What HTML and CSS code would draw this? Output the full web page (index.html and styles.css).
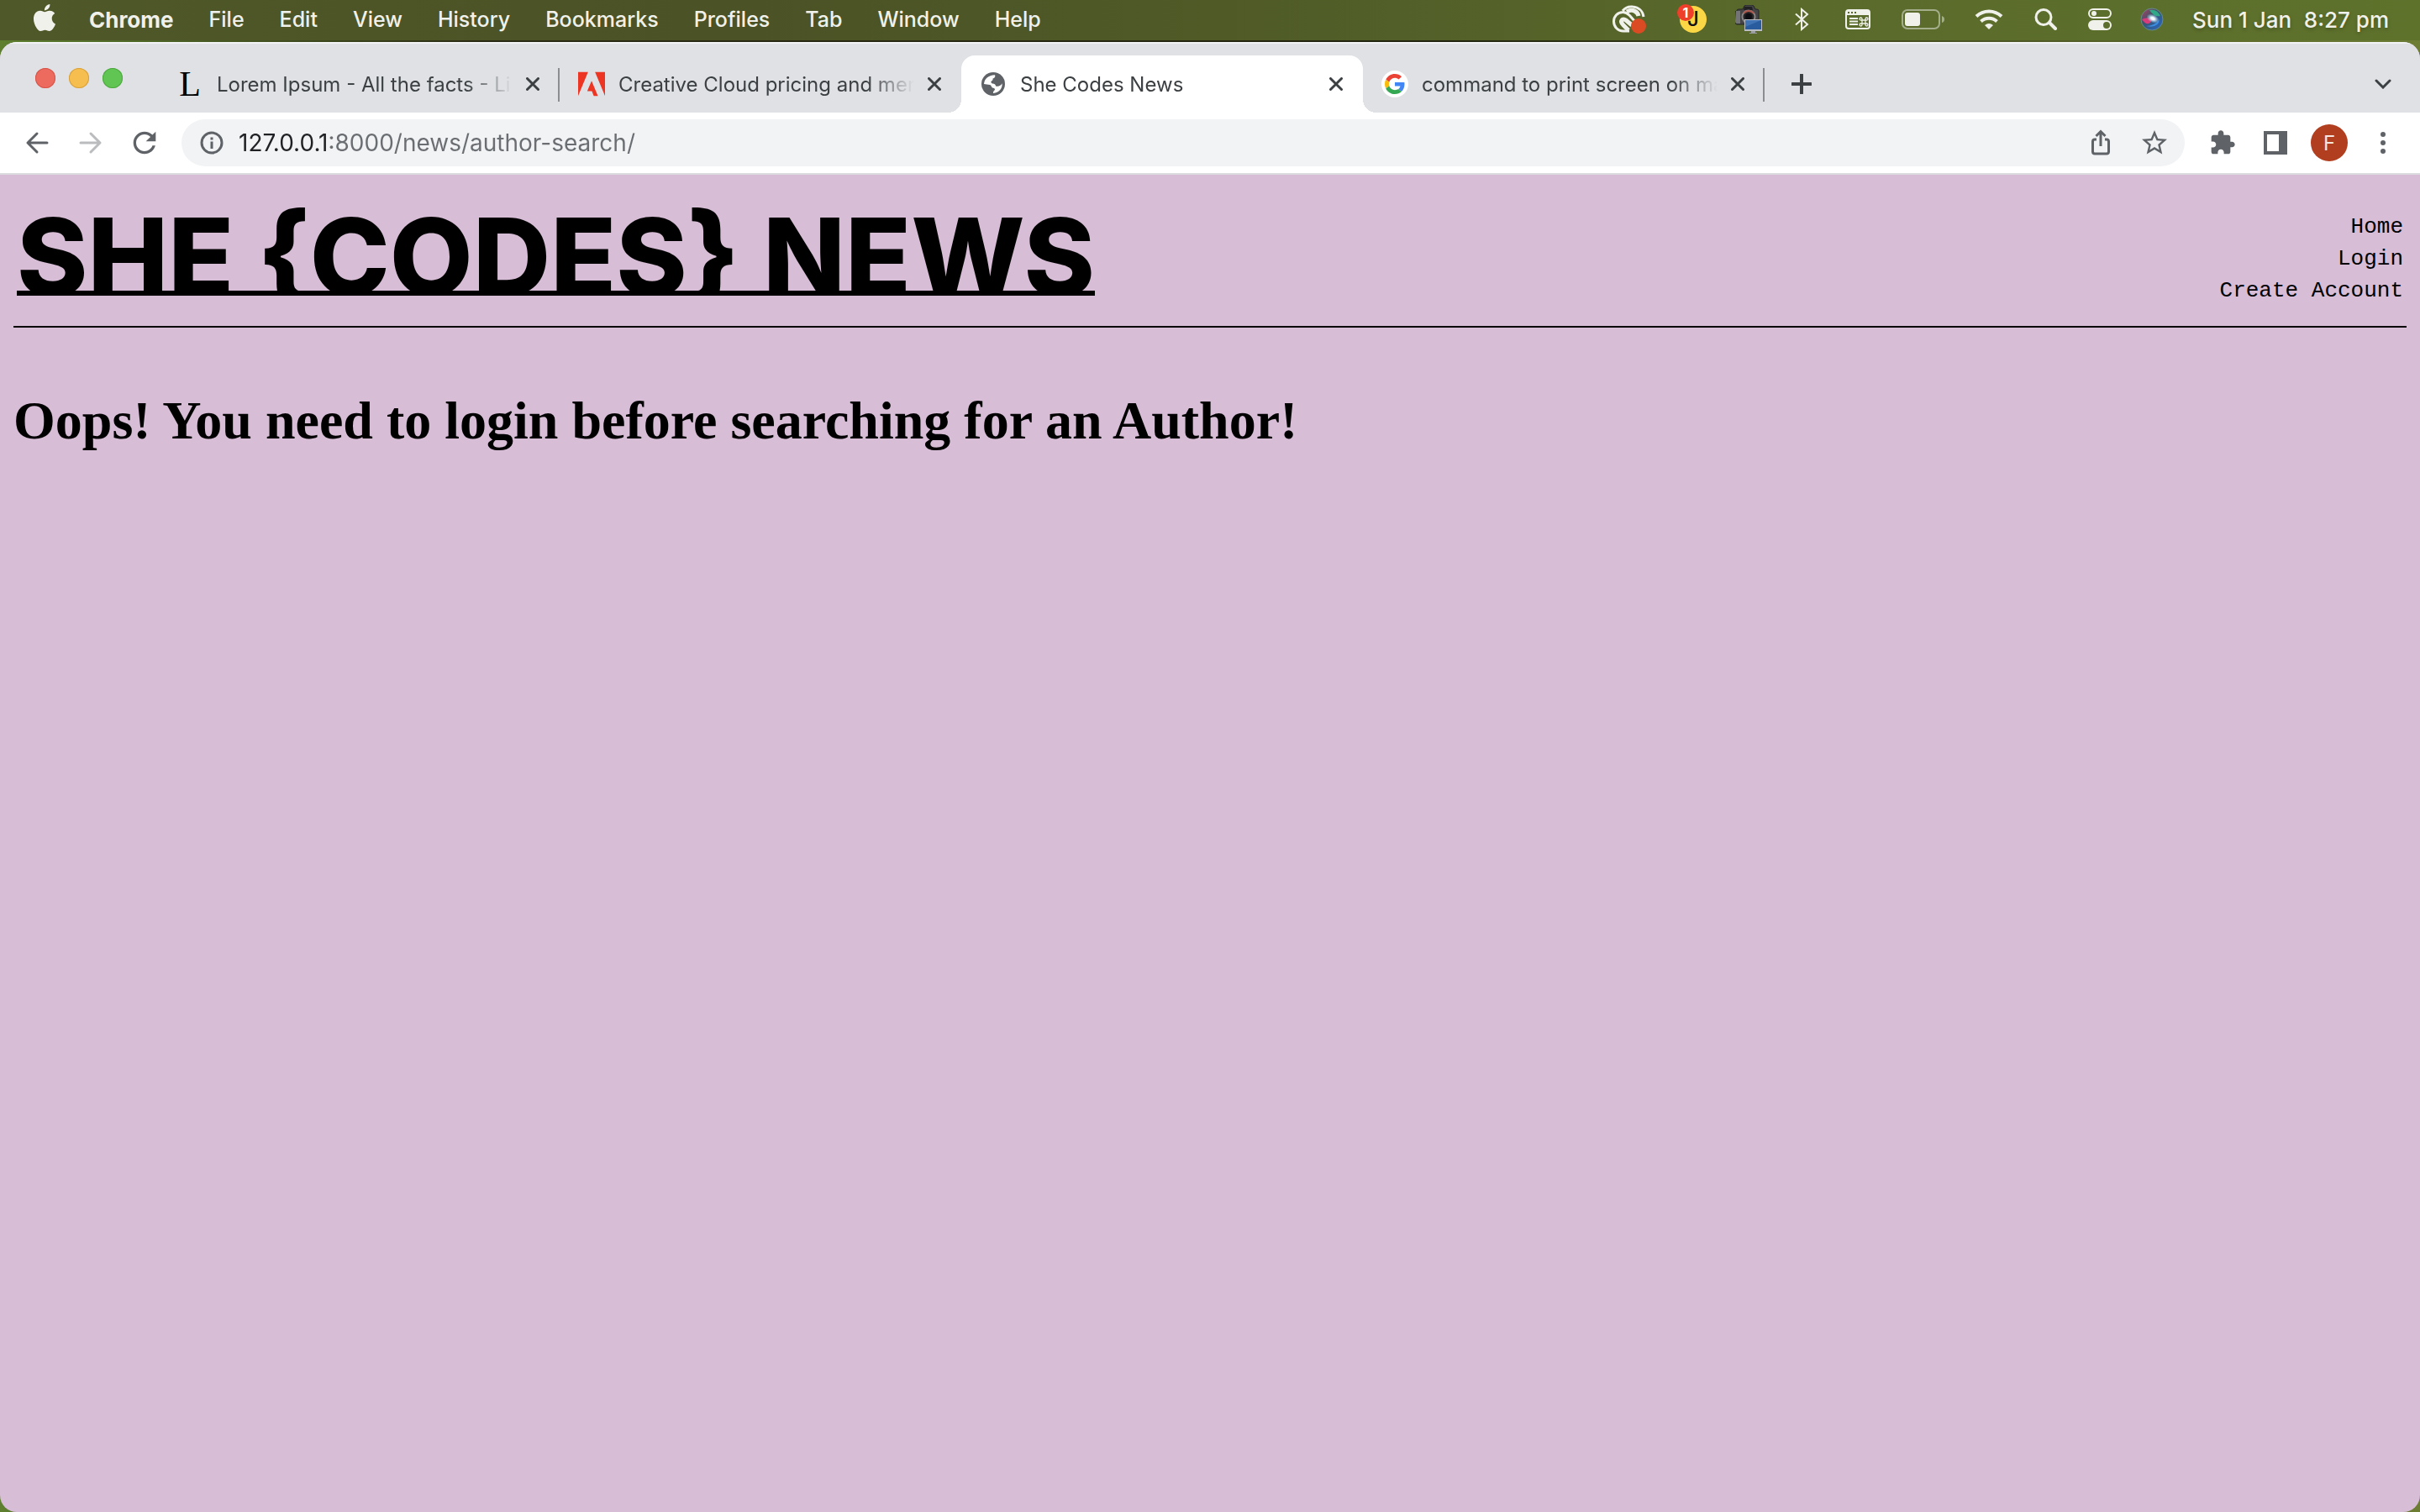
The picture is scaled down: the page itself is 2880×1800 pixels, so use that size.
FILE: index.html
```html
<!DOCTYPE html>
<html lang="en">
<head>
<meta charset="utf-8">
<title>She Codes News</title>
<link rel="stylesheet" href="styles.css">
</head>
<body>
<div class="menubar">
  <nav class="menus" aria-label="Application menu">
    <button class="apple" aria-label="Apple menu"><svg width="32" height="32" viewBox="0 0 24 24" fill="currentColor"><path d="M12.152 6.896c-.948 0-2.415-1.078-3.96-1.04-2.04.027-3.91 1.183-4.961 3.014-2.117 3.675-.546 9.103 1.519 12.09 1.013 1.454 2.208 3.09 3.792 3.039 1.52-.065 2.09-.987 3.935-.987 1.831 0 2.35.987 3.96.948 1.637-.026 2.676-1.48 3.676-2.948 1.156-1.688 1.636-3.325 1.662-3.415-.039-.013-3.182-1.221-3.22-4.857-.026-3.04 2.48-4.494 2.597-4.559-1.429-2.09-3.623-2.324-4.39-2.376-2-.156-3.675 1.09-4.61 1.09zM15.53 3.83c.843-1.012 1.4-2.427 1.245-3.83-1.207.052-2.662.805-3.532 1.818-.78.896-1.454 2.338-1.273 3.714 1.338.104 2.715-.688 3.559-1.701"/></svg></button>
    <button class="app-name">Chrome</button>
    <button>File</button>
    <button>Edit</button>
    <button>View</button>
    <button>History</button>
    <button>Bookmarks</button>
    <button>Profiles</button>
    <button>Tab</button>
    <button>Window</button>
    <button>Help</button>
  </nav>
  <div class="status">
    <button aria-label="Creative Cloud"><svg width="44" height="36" viewBox="0 0 44 36" fill="none" stroke="currentColor" stroke-width="3"><path d="M12 8C15 4 19 2.500 24 3c7 .5 12 5 13 12M20 32H13C6 32 1.500 26.500 1.500 20.500S6 9.500 12.500 9.500c4 0 6 2 8 4l7 8"/><path d="M19 31l-6-6c-5-5-1-9 3-6l7 6M17 9c7-4 13 0 14 5" stroke-width="5"/><circle cx="31" cy="26" r="9" fill="#da4b24" stroke="none"/></svg></button>
    <button class="j-app" aria-label="J, 1 notification"><span class="j-face">J</span><span class="badge">1</span></button>
    <button aria-label="Screen capture"><svg width="32" height="34" viewBox="0 0 32 34"><path d="M2 7q0-2 2-2h5l2-4 2-1h7l2 1 2 4h2q2 0 2 2v16H2q-2 0-2-3V8z" fill="#454548" stroke="#242427"/><path d="M1 7h5v15H2q-2 0-2-3z" fill="#747477"/><path d="M11 2h9l1 4H10z" fill="#222225"/><circle cx="16" cy="14" r="7.500" fill="#252527" stroke="#8b8585" stroke-width="2"/><path d="M10 10a7.500 7.500 0 0 1 12 0" stroke="#ad574d" stroke-width="2" fill="none"/><circle cx="16" cy="14" r="4" fill="#0d0d13"/><path d="M11 17h21v14H11z" fill="#b9bdc1"/><path d="M12 18h19v11H12z" fill="#285c9f"/><path d="M12 18h19L12 26z" fill="#3f73b3"/><path d="M19 31h5v2h2v1h-9v-1h2z" fill="#9b9da0"/></svg></button>
    <button aria-label="Bluetooth"><svg width="26" height="28" viewBox="0 0 26 28" fill="none" stroke="currentColor" stroke-width="2"><path d="M6 7.500L20 20l-7 6V2l7 6L6 20.500"/></svg></button>
    <button aria-label="Shortcuts"><svg width="38" height="24" viewBox="0 0 38 24"><rect x="6" y="1" width="28" height="22" rx="3" fill="none" stroke="currentColor" stroke-width="2"/><path d="M6 1h28v6H6z" fill="currentColor"/><path d="M8 3h2v2H8zm4 0h2v2h-2zm4 0h2v2h-2z" fill="#59682a"/><path d="M10 11h10M10 14.500h10M10 18h10" stroke="currentColor" stroke-width="2"/><path d="M25 13h4v4h-4zm0 0v-1.500A1.500 1.500 0 1 0 23.500 13zm4 0v-1.500A1.500 1.500 0 1 1 30.500 13zm-4 4v1.500A1.500 1.500 0 1 1 23.500 17zm4 0v1.500a1.500 1.500 0 1 0 1.500-1.500z" fill="none" stroke="currentColor" stroke-width="1.300"/></svg></button>
    <button aria-label="Battery"><svg width="52" height="24" viewBox="0 0 52 24"><rect x="1" y="1" width="44" height="22" rx="6" fill="none" stroke="#a5ae8c" stroke-width="2"/><path d="M48 8q3 1 3 4t-3 4z" fill="#a5ae8c"/><rect x="4" y="4" width="18" height="16" rx="3" fill="currentColor"/></svg></button>
    <button aria-label="Wi-Fi"><svg width="36" height="26" viewBox="0 0 36 26" fill="none" stroke="currentColor" stroke-width="4"><path d="M3 9.500a21.500 21.500 0 0 1 30 0M8.500 15.500a14 14 0 0 1 19 0"/><path d="M13 20q5-4 10 0l-5 5z" fill="currentColor" stroke="none"/></svg></button>
    <button aria-label="Search"><svg width="32" height="26" viewBox="0 0 32 26" fill="none" stroke="currentColor" stroke-width="3"><circle cx="13" cy="10.500" r="9"/><path d="M20 17l7 7" stroke-width="4" stroke-linecap="round"/></svg></button>
    <button aria-label="Control Centre"><svg width="28" height="26" viewBox="0 0 28 26"><rect x="1" y="1" width="26" height="10" rx="5" fill="none" stroke="currentColor" stroke-width="2"/><circle cx="7" cy="6" r="3" fill="currentColor"/><rect y="14" width="28" height="12" rx="6" fill="currentColor"/><circle cx="22" cy="20" r="4" fill="#5c6e2b"/></svg></button>
    <button aria-label="Siri"><svg width="28" height="28" viewBox="0 0 28 28"><defs><linearGradient id="orb" x1="0" y1="0" x2="1" y2="1"><stop offset="0" stop-color="#c23d63"/><stop offset=".4" stop-color="#3b5468"/><stop offset="1" stop-color="#2469cf"/></linearGradient><radialGradient id="glow"><stop offset="0" stop-color="#fff"/><stop offset=".3" stop-color="#eef6ff"/><stop offset="1" stop-color="#9ad6f5" stop-opacity="0"/></radialGradient></defs><circle cx="14" cy="14" r="13" fill="url(#orb)" stroke="#638b8d" stroke-width="1"/><path d="M11 3q9-2 13 7-7 2-13-7z" fill="#31a989"/><path d="M2 14q8-4 12 1-5 9-12-1z" fill="#d63c79"/><path d="M7 22q10 0 16-8-1 11-16 8z" fill="#3c8ddf"/><ellipse cx="15" cy="13" rx="8" ry="5" fill="url(#glow)" transform="rotate(25 15 13)"/></svg></button>
    <time class="clock"><span>Sun 1 Jan</span><span>8:27 pm</span></time>
  </div>
</div>

<div class="window">
  <div class="tabstrip">
    <div class="lights">
      <button class="light light-close" aria-label="Close window"></button>
      <button class="light light-min" aria-label="Minimise window"></button>
      <button class="light light-max" aria-label="Zoom window"></button>
    </div>
    <div class="tab divided">
      <span class="favicon serif-l">L</span>
      <span class="tab-title">Lorem Ipsum - All the facts - Li</span>
      <button class="tab-close" aria-label="Close tab"><svg width="16" height="16" viewBox="0 0 16 16"><path d="M1.500 1.500l13 13M14.500 1.500l-13 13"/></svg></button>
    </div>
    <div class="tab">
      <span class="favicon"><svg width="32" height="32" viewBox="0 0 24 24" fill="#ed3524"><path d="M13.966 22.624l-1.690-4.281H8.122l3.892-9.144 5.662 13.425zM8.884 1.376H0v21.248zm15.116 0h-8.884L24 22.624z"/></svg></span>
      <span class="tab-title">Creative Cloud pricing and mem</span>
      <button class="tab-close" aria-label="Close tab"><svg width="16" height="16" viewBox="0 0 16 16"><path d="M1.500 1.500l13 13M14.500 1.500l-13 13"/></svg></button>
    </div>
    <div class="tab active">
      <span class="favicon"><svg width="28" height="28" viewBox="0 0 28 28"><circle cx="14" cy="14" r="14" fill="#5f6368"/><path d="M3 14C3.500 8 8 3.500 16 3.200c1 2-.5 3.800-2.500 4.300C14 10 12 10 11.500 11c-.5 1 .5 2 1.500 2.500 3 0 4 1.500 4 3 3 1 7-1 7.500-3.500C25.500 19 21 24.500 14 25c-.5-2 1-3 2-4 0-2-1-2-3-2.500C11.500 17 12 15.500 10 15z" fill="#fff"/></svg></span>
      <span class="tab-title">She Codes News</span>
      <button class="tab-close" aria-label="Close tab"><svg width="16" height="16" viewBox="0 0 16 16"><path d="M1.500 1.500l13 13M14.500 1.500l-13 13"/></svg></button>
    </div>
    <div class="tab divided">
      <span class="favicon round"><svg width="24" height="24" viewBox="0 0 48 48"><path fill="#ea4335" d="M24 9.500c3.540 0 6.710 1.220 9.210 3.600l6.850-6.850C35.900 2.380 30.470 0 24 0 14.620 0 6.510 5.380 2.560 13.220l7.980 6.190C12.430 13.720 17.740 9.500 24 9.500z"/><path fill="#4285f4" d="M46.980 24.550c0-1.570-.15-3.090-.38-4.550H24v9.020h12.940c-.58 2.960-2.260 5.480-4.780 7.180l7.730 6c4.510-4.180 7.090-10.360 7.090-17.650z"/><path fill="#fbbc05" d="M10.530 28.590c-.48-1.450-.76-2.990-.76-4.590s.27-3.140.76-4.590l-7.980-6.190C.92 16.460 0 20.120 0 24c0 3.880.92 7.540 2.560 10.780l7.970-6.190z"/><path fill="#34a853" d="M24 48c6.480 0 11.930-2.130 15.890-5.810l-7.730-6c-2.150 1.450-4.920 2.300-8.160 2.300-6.260 0-11.570-4.220-13.470-9.910l-7.980 6.190C6.510 42.620 14.620 48 24 48z"/></svg></span>
      <span class="tab-title">command to print screen on ma</span>
      <button class="tab-close" aria-label="Close tab"><svg width="16" height="16" viewBox="0 0 16 16"><path d="M1.500 1.500l13 13M14.500 1.500l-13 13"/></svg></button>
    </div>
    <button class="new-tab" aria-label="New tab"><svg width="24" height="24" viewBox="0 0 24 24"><path d="M12 1v22M1 12h22"/></svg></button>
    <button class="tab-search" aria-label="Search tabs"><svg width="20" height="12" viewBox="0 0 20 12"><path d="M2 2l8 8 8-8"/></svg></button>
  </div>

  <div class="toolbar">
    <div class="nav-buttons">
      <button aria-label="Back"><svg width="28" height="28" viewBox="0 0 28 28" fill="none" stroke="currentColor" stroke-width="3" stroke-linecap="round" stroke-linejoin="round"><path d="M26 14H3M14 3L3 14l11 11"/></svg></button>
      <button class="disabled" aria-label="Forward"><svg width="28" height="28" viewBox="0 0 28 28" fill="none" stroke="currentColor" stroke-width="3" stroke-linecap="round" stroke-linejoin="round"><path d="M2 14h23M14 3l11 11-11 11"/></svg></button>
      <button aria-label="Reload"><svg width="40" height="40" viewBox="0 0 24 24" fill="currentColor"><path d="M17.650 6.350C16.200 4.900 14.210 4 12 4c-4.420 0-7.990 3.580-7.990 8s3.570 8 7.990 8c3.730 0 6.840-2.550 7.730-6h-2.080c-.82 2.330-3.040 4-5.650 4-3.310 0-6-2.690-6-6s2.690-6 6-6c1.660 0 3.140.69 4.220 1.780L13 11h7V4l-2.350 2.350z"/></svg></button>
    </div>
    <div class="omnibox">
      <svg width="28" height="28" viewBox="0 0 28 28" fill="none" stroke="#5f6368" stroke-width="3"><circle cx="14" cy="14" r="12"/><path d="M14 12.500V21M14 7.500v3"/></svg>
      <input class="url" type="text" value="127.0.0.1:8000/news/author-search/" aria-label="Address and search bar">
      <button aria-label="Share"><svg width="36" height="36" viewBox="0 0 36 36" fill="none" stroke="currentColor" stroke-width="3"><path d="M13 14H11q-2.500 0-2.500 2.500v12Q8.500 31 11 31h14q2.500 0 2.500-2.500v-12Q27.500 14 25 14h-2"/><path d="M18 22V5M12.500 10L18 4.500l5.500 5.500"/></svg></button>
      <button aria-label="Bookmark this tab"><svg width="36" height="36" viewBox="0 0 24 24" fill="currentColor"><path d="M22 9.240l-7.190-.62L12 2 9.190 8.630 2 9.240l5.460 4.730L5.820 21 12 17.270 18.180 21l-1.630-7.030L22 9.240zM12 15.400l-3.760 2.270 1-4.280-3.320-2.880 4.380-.38L12 6.100l1.710 4.040 4.380.38-3.320 2.880 1 4.280L12 15.400z"/></svg></button>
    </div>
    <div class="actions">
      <button aria-label="Extensions"><svg width="32" height="32" viewBox="0 0 24 24" fill="currentColor"><path d="M20.500 11H19V7c0-1.100-.9-2-2-2h-4V3.500C13 2.120 11.880 1 10.500 1S8 2.120 8 3.500V5H4c-1.100 0-1.990.9-1.990 2v3.800H3.500c1.490 0 2.700 1.210 2.700 2.700s-1.210 2.700-2.700 2.700H2V20c0 1.100.9 2 2 2h3.800v-1.500c0-1.490 1.210-2.700 2.700-2.700 1.490 0 2.700 1.210 2.700 2.700V22H17c1.100 0 2-.9 2-2v-4h1.500c1.380 0 2.500-1.120 2.500-2.500S21.880 11 20.500 11z"/></svg></button>
      <button aria-label="Side panel"><svg width="28" height="28" viewBox="0 0 28 28"><path d="M0 0h28v28H0zM4 4v20h14V4z" fill="currentColor" fill-rule="evenodd"/></svg></button>
      <button class="avatar" aria-label="Profile F">F</button>
      <button aria-label="Menu"><svg width="8" height="28" viewBox="0 0 8 28" fill="currentColor"><circle cx="4" cy="4" r="3"/><circle cx="4" cy="14" r="3"/><circle cx="4" cy="24" r="3"/></svg></button>
    </div>
  </div>

  <div class="page">
    <header class="masthead">
      <a class="brand" href="#">SHE {CODES} NEWS</a>
      <nav class="links" aria-label="Site">
        <a href="#">Home</a>
        <a href="#">Login</a>
        <a href="#">Create Account</a>
      </nav>
    </header>
    <main>
      <h1>Oops! You need to login before searching for an Author!</h1>
    </main>
  </div>
</div>
</body>
</html>
```
FILE: styles.css
```css
* { box-sizing: border-box; }

body {
  margin: 0;
  min-height: 100vh;
  display: flex;
  flex-direction: column;
  font-family: Inter, "Liberation Sans", sans-serif;
  background: linear-gradient(90deg, #5d7f2e, #2b2a14 20%, #23240f 60%, #6d7d34);
}

button {
  display: flex;
  align-items: center;
  justify-content: center;
  margin: 0;
  padding: 0;
  border: 0;
  background: none;
  color: inherit;
  font: inherit;
}

svg { display: block; }

/* Menu bar */
.menubar {
  display: flex;
  justify-content: space-between;
  align-items: center;
  height: 48px;
  margin-bottom: 2px;
  padding: 0 37px 2px;
  font-size: 25px;
  font-weight: 500;
  color: #f0f1ea;
  text-shadow: 0 2px 4px rgba(0, 0, 0, .25);
  background: linear-gradient(90deg, #4f5828, #4b5226 30%, #4f5a27 50%, #5a6a2b 75%, #5e722c);
}

.menus { display: flex; align-items: center; gap: 42px; }
.apple { margin-right: -5px; padding-bottom: 4px; }
.app-name { font-size: 26px; font-weight: 700; }

.status { display: flex; align-items: center; gap: 34px; }
.clock { display: flex; justify-content: space-between; width: 234px; font-size: 26px; }
.j-app { position: relative; width: 34px; height: 32px; justify-content: flex-end; }
.j-face {
  width: 32px;
  height: 32px;
  border-radius: 50%;
  background: #fbd746;
  color: #111;
  font-size: 24px;
  line-height: 32px;
  text-shadow: none;
}
.badge {
  position: absolute;
  left: -1px;
  top: -2px;
  width: 20px;
  height: 20px;
  border-radius: 50%;
  background: #ee3f2a;
  color: #fff;
  font-size: 16px;
  font-weight: 700;
  line-height: 20px;
}

/* Browser window */
.window {
  flex: 1;
  display: flex;
  flex-direction: column;
  overflow: hidden;
  border-radius: 20px;
  background: #d7bdd6;
}

.tabstrip {
  display: flex;
  align-items: flex-end;
  height: 84px;
  padding-right: 34px;
  background: #dfe1e5;
  box-shadow: inset 0 2px #f2f3f5;
  color: #3c4043;
}
.lights { display: flex; gap: 16px; width: 188px; padding: 0 0 29px 42px; }
.light { width: 24px; height: 24px; border-radius: 50%; }
.light-close { background: #ed6a5e; box-shadow: inset 0 0 0 1px #d5554a; }
.light-min { background: #f5be4f; box-shadow: inset 0 0 0 1px #d8a13c; }
.light-max { background: #61c554; box-shadow: inset 0 0 0 1px #4fa73f; }

.tab {
  position: relative;
  display: flex;
  align-items: center;
  gap: 16px;
  width: 478px;
  height: 68px;
  padding: 0 24px 0 22px;
  font-size: 24px;
}
.divided::after {
  content: "";
  position: absolute;
  right: 0;
  top: 15px;
  width: 2px;
  height: 40px;
  background: #8a8d91;
}
.active { background: #fff; border-radius: 16px 16px 0 0; }
.active::before,
.active::after {
  content: "";
  position: absolute;
  bottom: 0;
  width: 16px;
  height: 16px;
}
.active::before { right: 100%; background: radial-gradient(circle at 0 0, transparent 16px, #fff 16px); }
.active::after { left: 100%; background: radial-gradient(circle at 100% 0, transparent 16px, #fff 16px); }

.favicon {
  display: flex;
  flex: none;
  align-items: center;
  justify-content: center;
  width: 32px;
  height: 32px;
}
.serif-l { font: 42px/32px "Liberation Serif", serif; color: #000; }
.round { border-radius: 50%; background: #fff; }
.tab-title {
  flex: 1;
  overflow: hidden;
  white-space: nowrap;
  mask-image: linear-gradient(90deg, #000 calc(100% - 56px), transparent);
}
.tab-close svg, .new-tab svg, .tab-search svg { fill: none; stroke: #3c4043; stroke-width: 3; stroke-linecap: round; }
.new-tab { width: 88px; height: 68px; }
.new-tab svg { stroke-width: 4; }
.tab-search { height: 68px; margin-left: auto; }

.toolbar {
  display: flex;
  align-items: center;
  height: 74px;
  padding: 0 40px 0 24px;
  border-bottom: 2px solid #dadcdf;
  background: #fff;
  color: #5f6368;
}
.nav-buttons { display: flex; gap: 24px; width: 192px; }
.nav-buttons button { width: 40px; height: 40px; }
.nav-buttons .disabled { color: #babcbe; }

.omnibox {
  flex: 1;
  display: flex;
  align-items: center;
  gap: 28px;
  height: 56px;
  padding: 0 18px 0 22px;
  border-radius: 28px;
  background: #f1f3f4;
}
.url {
  flex: 1;
  margin-left: -10px;
  padding: 0;
  border: 0;
  font: 28px/40px Inter, "Liberation Sans", sans-serif;
  color: transparent;
  background: linear-gradient(90deg, #202124 109px, #6a6d71 109px);
  background-clip: text;
}

.actions { display: flex; align-items: center; gap: 33px; padding-left: 29px; }
.actions button:last-child { margin-left: 5px; }
.avatar {
  width: 44px;
  height: 44px;
  margin-left: -5px;
  border-radius: 50%;
  background: #b03e1f;
  color: #f6e6e1;
  font-size: 24px;
}

/* Site */
.page { flex: 1; padding: 0 16px; color: #000; font-family: "Liberation Serif", serif; }
.masthead {
  display: flex;
  justify-content: space-between;
  align-items: center;
  height: 182px;
  padding: 20px 4px 0;
  border-bottom: 2px solid #000;
}
/* The title box ends on the baseline, so the braces and bowls are cut flat along the underline */
.brand {
  display: block;
  margin-bottom: 19px;
  padding-top: 14px;
  overflow: hidden;
  color: #000;
  font: 800 128px/93px Inter, "Liberation Sans", sans-serif;
  white-space: nowrap;
  text-decoration: underline 6px;
  text-decoration-skip-ink: none;
  text-underline-offset: -6px;
}
.links {
  display: flex;
  flex-direction: column;
  align-items: flex-end;
  font: 26px/38px "Liberation Mono", monospace;
}
.links a { color: #000; text-decoration: none; }
h1 { margin: 74px 0 0; font-size: 64px; line-height: 74px; }
```
